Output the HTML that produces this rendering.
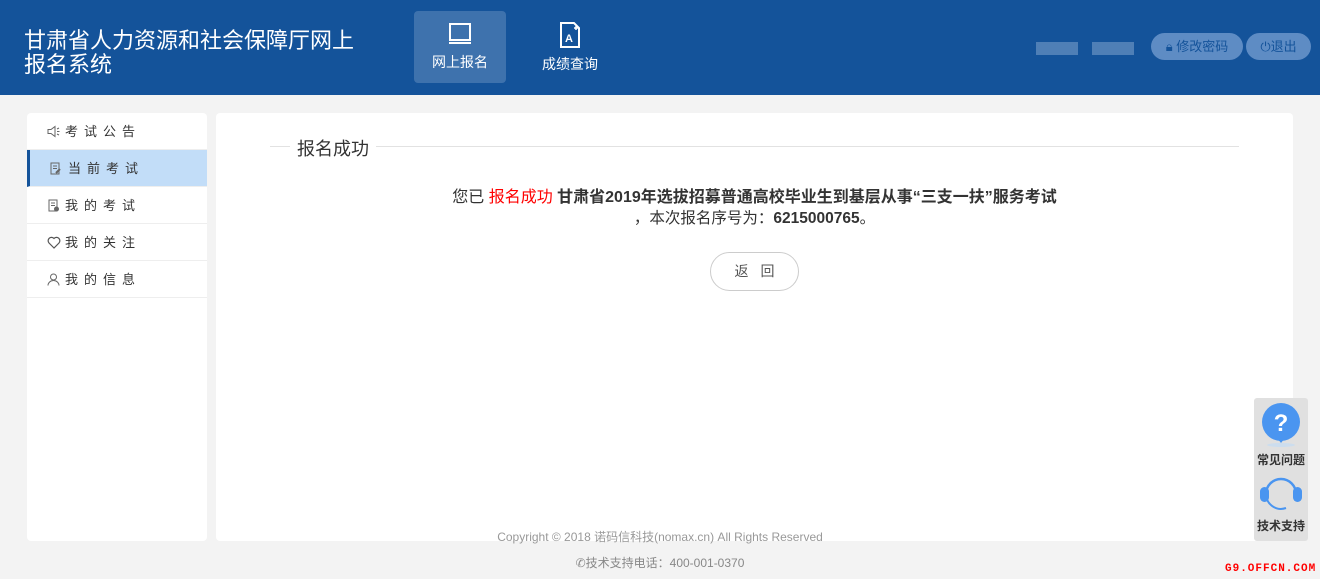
<!DOCTYPE html><html><head><meta charset="utf-8"><style>
*{margin:0;padding:0;box-sizing:border-box}
body{width:1320px;height:579px;background:#f3f3f3;font-family:"Liberation Sans","Noto Sans CJK SC",sans-serif;position:relative;overflow:hidden}
.hd{position:absolute;left:0;top:0;width:1320px;height:95px;background:#14539a}
.title{position:absolute;left:24px;top:29px;color:#fff;font-size:22px;line-height:24px}
.nav{position:absolute;top:11px;width:92px;height:72px;border-radius:4px;color:#fff;font-size:14px;text-align:center}
.nav svg{display:block;margin:11px auto 6px}
.blur{position:absolute;top:42px;height:13px;background:#4f7fb6}
.btn{position:absolute;top:33px;height:27px;border-radius:14px;background:#5e8cc4;color:#14539a;font-size:13px;line-height:27px;text-align:center}
.side{position:absolute;left:27px;top:113px;width:180px;height:428px;background:#fff;border-radius:4px}
.it{height:37px;border-bottom:1px solid #eee;font-size:13px;color:#333;line-height:37px;padding-left:20px;letter-spacing:6px;position:relative}
.it svg{position:absolute;left:20px;top:12px}
.it span{position:absolute;left:38px}
.it.on{background:#c2ddf8;border-left:3px solid #14539a}
.it.on svg{left:19px}.it.on span{left:38px}
.main{position:absolute;left:216px;top:113px;width:1077px;height:428px;background:#fff;border-radius:4px}
.ft{position:absolute;width:1320px;text-align:center;color:#999;font-size:12px}
</style></head><body>
<div class="hd">
<div class="title">甘肃省人力资源和社会保障厅网上<br>报名系统</div>
<div class="nav" style="left:414px;background:#3e72ad"><svg width="24" height="24" viewBox="0 0 24 24" fill="none" stroke="#fff" stroke-width="2"><rect x="2" y="2" width="20" height="16"/><path d="M1 21h22"/></svg>网上报名</div>
<div class="nav" style="left:524px"><svg width="24" height="26" viewBox="0 0 24 26" fill="none" stroke="#fff" stroke-width="2"><path d="M3 1h13l5 5v19H3z"/><text x="7" y="20" font-size="11" fill="#fff" stroke="none" font-weight="bold">A</text><path d="M16 6h4M18 4v4" stroke-width="1.5"/></svg>成绩查询</div>
<div class="blur" style="left:1036px;width:42px"></div>
<div class="blur" style="left:1092px;width:42px"></div>
<div class="btn" style="left:1151px;width:92px">🔒︎ 修改密码</div>
<div class="btn" style="left:1246px;width:65px">⏻退出</div>
</div>
<div class="side">
<div class="it"><svg width="13" height="13" viewBox="0 0 13 13" fill="none" stroke="#666"><path d="M1 4.5h3l4-3v10l-4-3H1z M10 4l2-1M10 6.5h2.5M10 9l2 1"/></svg><span>考试公告</span></div>
<div class="it on"><svg width="13" height="13" viewBox="0 0 13 13" fill="none" stroke="#666"><path d="M2 1h8v11H2z M4 4h4M4 6.5h4"/><path d="M7 11l4-4" stroke-width="2"/></svg><span>当前考试</span></div>
<div class="it"><svg width="13" height="13" viewBox="0 0 13 13" fill="none" stroke="#666"><path d="M2 1h8v11H2z M4 4h4M4 6.5h4"/><circle cx="9.5" cy="10" r="2" fill="#666"/></svg><span>我的考试</span></div>
<div class="it"><svg width="14" height="13" viewBox="0 0 14 13" fill="none" stroke="#555" stroke-width="1.2"><path d="M7 12L2 7a3 3 0 0 1 5-4.5A3 3 0 0 1 12 7z"/></svg><span>我的关注</span></div>
<div class="it"><svg width="13" height="13" viewBox="0 0 13 13" fill="none" stroke="#666"><circle cx="6.5" cy="4" r="3"/><path d="M1 12.5a5.5 5 0 0 1 11 0"/></svg><span>我的信息</span></div>
</div>
<div class="main">
<div style="position:absolute;left:54px;top:33px;width:969px;border-top:1px solid #e2e2e2"></div>
<div style="position:absolute;left:74px;top:22px;background:#fff;padding:0 7px;font-size:18px;color:#333">报名成功</div>
<div style="position:absolute;left:0;width:1077px;top:73px;text-align:center;color:#333;line-height:24px">
<div style="font-size:16px">您已 <span style="color:#f00">报名成功</span> <b>甘肃省2019年选拔招募普通高校毕业生到基层从事“三支一扶”服务考试</b></div>
<div style="margin-top:-3px;font-size:15.5px">，本次报名序号为：<b>6215000765</b>。</div></div>
<div style="position:absolute;left:494px;top:139px;width:89px;height:39px;border:1px solid #ccc;border-radius:20px;text-align:center;line-height:37px;font-size:14px;color:#555;letter-spacing:12px;padding-left:12px">返回</div>
</div>
<div class="ft" style="top:528px">Copyright © 2018 诺码信科技(nomax.cn) All Rights Reserved</div>
<div class="ft" style="top:554px;color:#888">✆技术支持电话：400-001-0370</div>
<div style="position:absolute;left:1254px;top:398px;width:54px;height:143px;background:#e0e0e0;border-radius:3px;text-align:center;font-size:12px;font-weight:bold;color:#333">
<svg width="44" height="48" viewBox="0 0 44 48" style="margin-top:3px;display:block;margin-left:5px"><ellipse cx="22" cy="44" rx="14" ry="2" fill="#cde"/><circle cx="22" cy="21" r="19" fill="#4a95f0"/><path d="M22 42l-4-5h8z" fill="#4a95f0"/><text x="22" y="30" font-size="24" font-weight="bold" fill="#fff" text-anchor="middle">?</text></svg>
<div style="margin-top:2px">常见问题</div>
<svg width="46" height="44" viewBox="0 0 46 44" style="margin-top:4px;display:block;margin-left:4px"><path d="M8 22a15 15 0 0 1 30 0" fill="none" stroke="#4a95f0" stroke-width="2.5"/><path d="M8 22a15 15 0 0 0 20 14" fill="none" stroke="#4a95f0" stroke-width="2"/><rect x="2" y="15" width="9" height="15" rx="4.5" fill="#4a95f0"/><rect x="35" y="15" width="9" height="15" rx="4.5" fill="#4a95f0"/></svg>
<div style="margin-top:1px">技术支持</div></div>
<div style="position:absolute;left:1225px;top:563px;color:#f00;font-size:11px;font-weight:bold;letter-spacing:1px;font-family:'Liberation Mono',monospace">G9.OFFCN.COM</div>
</body></html>
